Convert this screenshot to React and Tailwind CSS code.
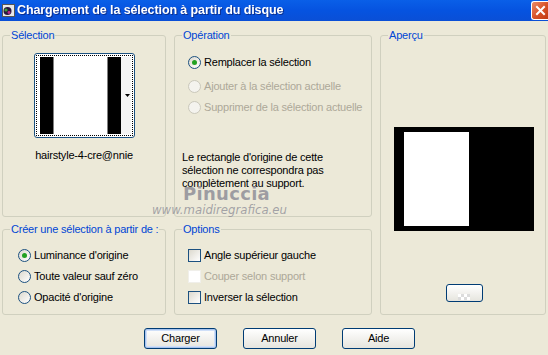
import React from "react";

const font = { fontFamily: '"Liberation Sans", Arial, sans-serif' };

function Radio({ checked, disabled, label }) {
  return (
    <div className="flex items-center h-[21px]">
      <span
        className={
          "w-[13px] h-[13px] rounded-full border flex items-center justify-center shrink-0 " +
          (disabled
            ? "border-[#cac8bb] bg-[#f4f3ee]"
            : "border-[#1c5180] bg-gradient-to-br from-[#dcd9ce] to-[#ffffff]")
        }
      >
        {checked && <span className="w-[5px] h-[5px] rounded-full bg-[#21a121]" />}
      </span>
      <span className={"ml-[3px] " + (disabled ? "text-[#aca899]" : "text-black")}>{label}</span>
    </div>
  );
}

function Check({ disabled, label }) {
  return (
    <div className="flex items-center h-[21px]">
      <span
        className={
          "w-[13px] h-[13px] border shrink-0 " +
          (disabled
            ? "border-[#f0efea] bg-white"
            : "border-[#1c5180] bg-gradient-to-br from-[#dcd9ce] to-[#ffffff]")
        }
      />
      <span className={"ml-[3px] " + (disabled ? "text-[#aca899]" : "text-black")}>{label}</span>
    </div>
  );
}

function Group({ title, className, children }) {
  return (
    <fieldset className={"border border-[#d0d0bf] rounded-[3px] px-0 " + className}>
      <legend className="ml-[7px] px-[1px] text-[#0046d5] leading-[13px]">{title}</legend>
      {children}
    </fieldset>
  );
}

function XpButton({ children, primary }) {
  return (
    <button
      className={
        "w-[73px] h-[21px] rounded-[3px] border border-[#003c74] bg-gradient-to-b from-[#ffffff] to-[#e6e5de] text-black leading-none " +
        (primary ? "shadow-[inset_0_0_0_1px_#a8c4ee,inset_0_0_0_2px_#cfdff8]" : "")
      }
    >
      {children}
    </button>
  );
}

export default function App() {
  return (
    <div
      className="w-[548px] h-[355px] bg-[#ece9d8] text-[11px] tracking-[-0.2px] overflow-hidden relative flex flex-col"
      style={font}
    >
      <div className="h-[21px] shrink-0 bg-gradient-to-b from-[#0a5fe8] via-[#0653e0] to-[#0a4fd6] flex items-center pl-[2px] relative">
        <svg width="13" height="13" viewBox="0 0 13 13" className="shrink-0">
          <rect x="0.5" y="0.5" width="12" height="12" fill="#e8e8e8" stroke="#555" />
          <circle cx="5.5" cy="7" r="4" fill="#2a1840" />
          <circle cx="4" cy="6" r="1.6" fill="#3fa03a" />
          <circle cx="7" cy="8.5" r="1.4" fill="#c02a8a" />
        </svg>
        <span className="ml-[2px] text-white font-bold text-[12.5px] tracking-[-0.1px] drop-shadow-[1px_1px_0_#0b2f8f]">
          Chargement de la sélection à partir du disque
        </span>
        <div className="ml-auto mr-0 w-[17px] h-[19px] mt-[1px] self-start rounded-l-[3px] border border-white border-r-0 bg-gradient-to-br from-[#e98c6a] via-[#d9542a] to-[#c23a12] flex items-center justify-center">
          <svg width="11" height="11" viewBox="0 0 11 11">
            <path d="M2 2 L9 9 M9 2 L2 9" stroke="white" strokeWidth="2" strokeLinecap="square" />
          </svg>
        </div>
      </div>

      <div className="grid grid-cols-[164px_198px_166px] gap-x-[8px] pl-[2px] pt-[8px]">
        <div className="flex flex-col gap-[6px]">
          <Group title="Sélection" className="h-[188px]">
            <div className="flex flex-col items-center pt-[11px]">
              <div className="w-[101px] h-[85px] rounded-[3px] border border-[#1c5180] bg-white p-[1px] relative">
                <div className="w-full h-full border border-dotted border-black p-[1px] flex">
                  <div className="w-[13px] bg-black ml-[2px]" />
                  <div className="w-[1px] bg-[#808080]" />
                  <div className="w-[53px] bg-white" />
                  <div className="w-[1px] bg-[#808080]" />
                  <div className="w-[13px] bg-black" />
                  <div className="flex-1 bg-[#f4f4f4]" />
                </div>
                <svg width="5" height="3" viewBox="0 0 5 3" className="absolute right-[4px] top-[40px]">
                  <path d="M0 0 H5 L2.5 3 Z" fill="black" />
                </svg>
              </div>
              <div className="mt-[9px] text-black">hairstyle-4-cre@nnie</div>
            </div>
          </Group>
          <Group title="Créer une sélection à partir de :" className="h-[92px]">
            <div className="pl-[15px] pt-[9px] flex flex-col">
              <Radio checked label="Luminance d'origine" />
              <Radio label="Toute valeur sauf zéro" />
              <Radio label="Opacité d'origine" />
            </div>
          </Group>
        </div>

        <div className="flex flex-col gap-[6px]">
          <Group title="Opération" className="h-[188px]">
            <div className="pl-[13px] pt-[10px] flex flex-col">
              <Radio checked label="Remplacer la sélection" />
              <div className="h-[3px]" />
              <Radio disabled label="Ajouter à la sélection actuelle" />
              <Radio disabled label="Supprimer de la sélection actuelle" />
            </div>
            <p className="pl-[7px] pt-[33px] leading-[13px] w-[180px] text-black">
              Le rectangle d'origine de cette sélection ne correspondra pas complètement au support.
            </p>
          </Group>
          <Group title="Options" className="h-[92px]">
            <div className="pl-[13px] pt-[9px] flex flex-col">
              <Check label="Angle supérieur gauche" />
              <Check disabled label="Couper selon support" />
              <Check label="Inverser la sélection" />
            </div>
          </Group>
        </div>

        <Group title="Aperçu" className="h-[286px]">
          <div className="flex flex-col items-center pt-[85px] pl-[2px]">
            <div className="w-[140px] h-[104px] bg-black pl-[10px] pt-[5px]">
              <div className="w-[65px] h-[94px] bg-white" />
            </div>
            <div className="mt-[53px] w-[37px] h-[18px] rounded-[3px] border border-[#003c74] bg-gradient-to-b from-[#ffffff] to-[#e6e5de] flex items-end justify-center">
              <div className="grid grid-cols-4 w-[12px] h-[6px] mb-[1px]">
                <span className="bg-white" />
                <span className="bg-[#dcdcdc]" />
                <span className="bg-white" />
                <span className="bg-[#dcdcdc]" />
                <span className="bg-[#dcdcdc]" />
                <span className="bg-white" />
                <span className="bg-[#dcdcdc]" />
                <span className="bg-white" />
              </div>
            </div>
          </div>
        </Group>
      </div>

      <div className="flex gap-[26px] pl-[144px] mt-[13px]">
        <XpButton primary>Charger</XpButton>
        <XpButton>Annuler</XpButton>
        <XpButton>Aide</XpButton>
      </div>

      <div className="absolute left-[183px] top-[180px] text-[18px] font-semibold text-[#83838f]/75 tracking-[0.3px] pointer-events-none" style={{ fontFamily: '"DejaVu Sans", sans-serif' }}>
        Pinuccia
      </div>
      <div className="absolute left-[152px] top-[200px] text-[13px] italic text-[#8a8a94]/75 tracking-[0px] pointer-events-none" style={{ fontFamily: '"DejaVu Sans Condensed", "DejaVu Sans", sans-serif' }}>
        www.maidiregrafica.eu
      </div>
    </div>
  );
}
